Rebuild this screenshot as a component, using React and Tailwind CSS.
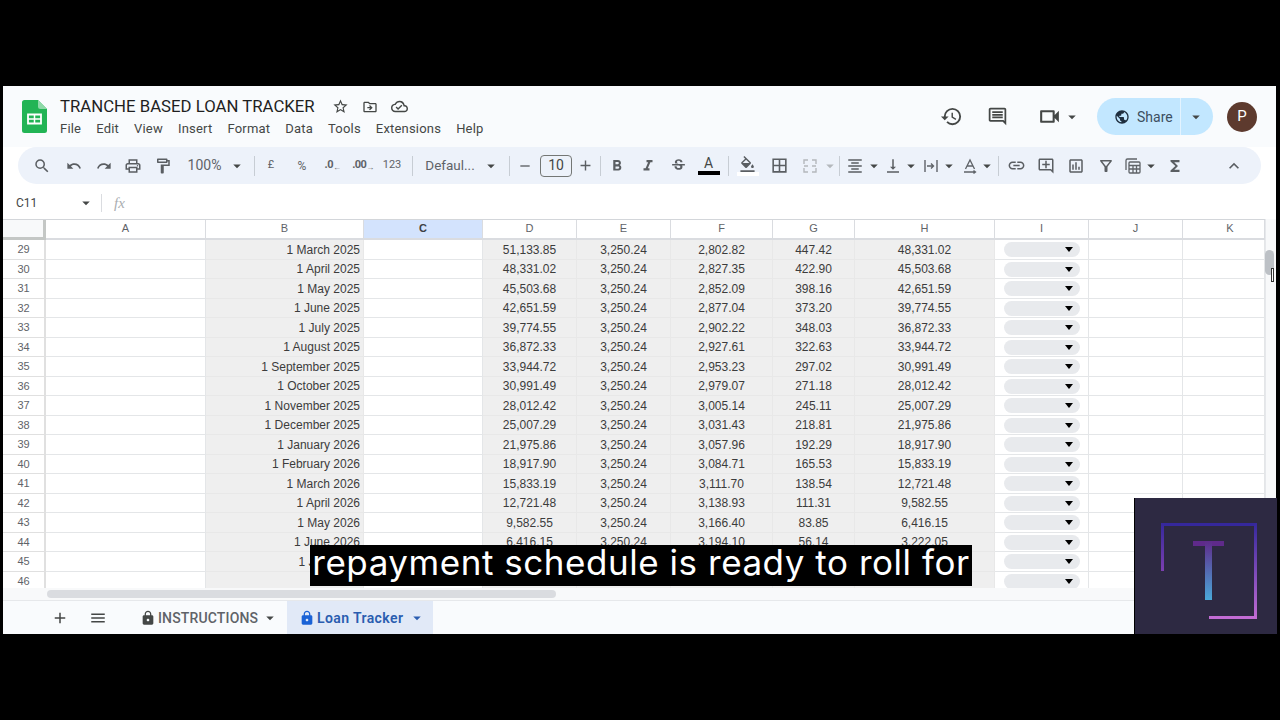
import {
  MdSearch, MdUndo, MdRedo, MdOutlinePrint, MdOutlineFormatPaint, MdArrowDropDown, MdRemove, MdAdd, MdFormatBold,
  MdFormatItalic, MdStrikethroughS, MdOutlineFormatColorFill, MdBorderAll, MdFormatAlignCenter, MdVerticalAlignBottom,
  MdLink, MdOutlineAddComment, MdOutlineInsertChart, MdOutlineFilterAlt, MdFunctions, MdKeyboardArrowUp,
  MdLock, MdMenu, MdStarBorder, MdOutlineDriveFileMove, MdOutlineCloudDone, MdHistory, MdOutlineComment,
  MdOutlineVideocam, MdPublic,
} from "react-icons/md";

const rows = [
  [29, "1 March 2025", "51,133.85", "2,802.82", "447.42", "48,331.02"],
  [30, "1 April 2025", "48,331.02", "2,827.35", "422.90", "45,503.68"],
  [31, "1 May 2025", "45,503.68", "2,852.09", "398.16", "42,651.59"],
  [32, "1 June 2025", "42,651.59", "2,877.04", "373.20", "39,774.55"],
  [33, "1 July 2025", "39,774.55", "2,902.22", "348.03", "36,872.33"],
  [34, "1 August 2025", "36,872.33", "2,927.61", "322.63", "33,944.72"],
  [35, "1 September 2025", "33,944.72", "2,953.23", "297.02", "30,991.49"],
  [36, "1 October 2025", "30,991.49", "2,979.07", "271.18", "28,012.42"],
  [37, "1 November 2025", "28,012.42", "3,005.14", "245.11", "25,007.29"],
  [38, "1 December 2025", "25,007.29", "3,031.43", "218.81", "21,975.86"],
  [39, "1 January 2026", "21,975.86", "3,057.96", "192.29", "18,917.90"],
  [40, "1 February 2026", "18,917.90", "3,084.71", "165.53", "15,833.19"],
  [41, "1 March 2026", "15,833.19", "3,111.70", "138.54", "12,721.48"],
  [42, "1 April 2026", "12,721.48", "3,138.93", "111.31", "9,582.55"],
  [43, "1 May 2026", "9,582.55", "3,166.40", "83.85", "6,416.15"],
  [44, "1 June 2026", "6,416.15", "3,194.10", "56.14", "3,222.05"],
  [45, "1 July 2026", "", "", "", ""],
  [46, "", "", "", "", "0.00"],
];

const gridCols = "grid grid-cols-[43px_160px_158px_119px_94px_94px_102px_82px_140px_94px_94px_82px]";
const cols = "ABCDEFGHIJK".split("");
const colWidths = {
  A: "w-[160px]", B: "w-[158px]", C: "w-[119px]", D: "w-[94px]", E: "w-[94px]", F: "w-[102px]",
  G: "w-[82px]", H: "w-[140px]", I: "w-[94px]", J: "w-[94px]", K: "w-[82px] pl-[13px]",
};

function Tool({ w, children, className = "" }) {
  return <div className={`${w} h-full flex items-center justify-center shrink-0 ${className}`}>{children}</div>;
}

function Sep({ ml = "" }) {
  return <div className={`w-[1px] ${ml} h-[20px] bg-[#c7cdd4] shrink-0`} />;
}

function Caret({ className = "" }) {
  return <MdArrowDropDown size={18} className={`shrink-0 text-[#444746] ${className}`} />;
}

function WrapIcon() {
  return (
    <svg width="16" height="16" viewBox="0 0 16 16" fill="none" stroke="#5f6368" strokeWidth="1.4" className="shrink-0">
      <path d="M2 2v12M14 2v12M4 8h6M8 5.5 10.5 8 8 10.5" />
    </svg>
  );
}

function MergeIcon() {
  return (
    <svg width="16" height="16" viewBox="0 0 16 16" fill="none" stroke="#b4b8bc" strokeWidth="1.4" className="shrink-0">
      <path d="M2 6V2h4M10 2h4v4M2 10v4h4M10 14h4v-4M6 8H2M14 8h-4" />
    </svg>
  );
}

function TiltIcon() {
  return (
    <svg width="16" height="16" viewBox="0 0 16 16" fill="none" stroke="#5f6368" strokeWidth="1.3" className="shrink-0">
      <path d="M3.5 11 8 2l4.5 9M5 8h6M2 14h11M11.5 12.5 13.5 14l-2 1.5" />
    </svg>
  );
}

function CalcIcon() {
  return (
    <svg width="18" height="18" viewBox="0 0 18 18" fill="none" stroke="#5f6368" strokeWidth="1.3" className="shrink-0">
      <path d="M2 13V3.5A1.5 1.5 0 0 1 3.5 2H13" />
      <rect x="5" y="5" width="11" height="11" rx="1" />
      <path d="M5 8.5h11M5 12h11M9 8.5V16M12.5 8.5V16" />
    </svg>
  );
}

function SheetsLogo() {
  return (
    <svg width="25" height="33" viewBox="0 0 25 33" className="shrink-0">
      <path d="M2.5 0H16l9 9v21.5a2.5 2.5 0 0 1-2.5 2.5h-20A2.5 2.5 0 0 1 0 30.5v-28A2.5 2.5 0 0 1 2.5 0Z" fill="#22b455" />
      <path d="M16 0l9 9h-6.5A2.5 2.5 0 0 1 16 6.5Z" fill="#8ed9a8" />
      <path d="M6 14.5h13v9H6Z" fill="none" stroke="#fff" strokeWidth="1.8" />
      <path d="M6 19h13M12.5 14.5v9" stroke="#fff" strokeWidth="1.5" />
    </svg>
  );
}

function Logo() {
  return (
    <svg width="143" height="136" viewBox="0 0 143 136" className="-ml-[1px]">
      <defs>
        <linearGradient id="frameRight" x1="0" y1="0" x2="0" y2="1">
          <stop offset="0" stopColor="#35289c" />
          <stop offset="1" stopColor="#c26cd4" />
        </linearGradient>
        <linearGradient id="frameLeft" x1="0" y1="0" x2="0" y2="1">
          <stop offset="0" stopColor="#35289c" />
          <stop offset="1" stopColor="#7c3fb0" />
        </linearGradient>
        <linearGradient id="stem" x1="0" y1="0" x2="0" y2="1">
          <stop offset="0" stopColor="#5f2a8a" />
          <stop offset="1" stopColor="#4aa8d8" />
        </linearGradient>
      </defs>
      <rect x="27" y="25" width="95" height="3" fill="#35289c" />
      <rect x="27" y="25" width="3" height="48" fill="url(#frameLeft)" />
      <rect x="120" y="25" width="3" height="96" fill="url(#frameRight)" />
      <rect x="75" y="118" width="48" height="3" fill="#c26cd4" />
      <rect x="59" y="43" width="31" height="5" fill="#5f2a8a" />
      <rect x="71" y="43" width="7" height="59" fill="url(#stem)" />
    </svg>
  );
}

function Header() {
  return (
    <div className="h-[61px] flex items-center pl-[19px] pr-[19px] bg-[#f9fbfd] shrink-0">
      <SheetsLogo />
      <div className="ml-[13px] flex flex-col">
        <div className="flex items-center h-[24px]">
          <span className="font-['Roboto',sans-serif] text-[#1f1f1f] text-[16.75px] leading-none w-[255px] whitespace-nowrap">
            TRANCHE BASED LOAN TRACKER
          </span>
          <MdStarBorder size={17} className="ml-[17px] text-[#444746]" />
          <MdOutlineDriveFileMove size={16} className="ml-[13px] text-[#444746]" />
          <MdOutlineCloudDone size={17} className="ml-[13px] text-[#444746]" />
        </div>
        <div className="flex items-center gap-[15px] h-[20px] font-['Roboto',sans-serif] text-[13px] text-[#444746] tracking-[0.2px] leading-none">
          {["File", "Edit", "View", "Insert", "Format", "Data", "Tools", "Extensions", "Help"].map((m) => (
            <span key={m}>{m}</span>
          ))}
        </div>
      </div>
      <div className="ml-auto flex items-center">
        <MdHistory size={23} className="-ml-[1px] text-[#444746]" />
        <MdOutlineComment size={21} className="ml-[24px] text-[#444746]" />
        <MdOutlineVideocam size={25} className="ml-[29px] text-[#444746]" />
        <Caret className="ml-[1px]" />
        <div className="ml-[16px] w-[116px] h-[37px] rounded-full bg-[#c2e7ff] flex items-center">
          <div className="w-[84px] h-full flex items-center pl-[17px] border-r border-[#e3f3ff]">
            <MdPublic size={16} className="text-[#1f2f3f]" />
            <span className="ml-[7px] font-['Roboto',sans-serif] text-[14px] text-[#3d4f5f] leading-none">Share</span>
          </div>
          <Caret className="ml-[6px]" />
        </div>
        <div className="ml-[14px] w-[30px] h-[30px] rounded-full bg-[#5d3a2e] flex items-center justify-center font-['Roboto',sans-serif] text-white text-[15px]">
          P
        </div>
      </div>
    </div>
  );
}

function Toolbar() {
  const ic = "shrink-0 text-[#5a5e62]";
  return (
    <div className="mx-[15px] h-[37px] rounded-full bg-[#edf2fa] flex items-center pl-[9px] shrink-0 font-['Roboto',sans-serif] text-[#5f6368]">
      <Tool w="w-[30px]"><MdSearch size={18} className={ic} /></Tool>
      <Tool w="w-[34px]"><MdUndo size={16} className={ic} /></Tool>
      <Tool w="w-[25px]"><MdRedo size={16} className={ic} /></Tool>
      <Tool w="w-[34px]"><MdOutlinePrint size={18} className={ic} /></Tool>
      <Tool w="w-[26px]"><MdOutlineFormatPaint size={18} className={ic} /></Tool>
      <Tool w="w-[57px]"><span className="text-[14px] text-[#5f6368]">100%</span></Tool>
      <Tool w="w-[8px]"><Caret /></Tool>
      <Sep ml="ml-[13px]" />
      <Tool w="w-[32px]"><span className="text-[11px]">£</span></Tool>
      <Tool w="w-[30px]"><span className="text-[12px]">%</span></Tool>
      <Tool w="w-[31px]"><span className="text-[11px] font-bold tracking-tighter">.0<sub className="text-[8px]">←</sub></span></Tool>
      <Tool w="w-[30px]"><span className="text-[11px] font-bold tracking-tighter">.00<sub className="text-[8px]">→</sub></span></Tool>
      <Tool w="w-[28px]"><span className="text-[11px]">123</span></Tool>
      <Sep ml="ml-[6px]" />
      <Tool w="w-[74px]"><span className="text-[13.5px]">Defaul...</span></Tool>
      <Tool w="w-[8px]"><Caret /></Tool>
      <Sep ml="ml-[14px]" />
      <Tool w="w-[30px]"><MdRemove size={16} className={ic} /></Tool>
      <Tool w="w-[32px]">
        <div className="w-[32px] h-[22px] rounded-[4px] border border-[#747775] flex items-center justify-center text-[14px] text-[#444746]">10</div>
      </Tool>
      <Tool w="w-[26px]"><MdAdd size={17} className={ic} /></Tool>
      <Sep ml="ml-[2px]" />
      <Tool w="w-[32px]"><MdFormatBold size={18} className={ic} /></Tool>
      <Tool w="w-[30px]"><MdFormatItalic size={18} className={ic} /></Tool>
      <Tool w="w-[30px]"><MdStrikethroughS size={17} className={ic} /></Tool>
      <Tool w="w-[31px]">
        <div className="flex flex-col items-center">
          <span className="text-[14px] leading-[13px] text-[#444746]">A</span>
          <div className="w-[22px] h-[4px] mt-[1px] bg-black" />
        </div>
      </Tool>
      <Sep ml="ml-[4px]" />
      <Tool w="w-[37px]">
        <div className="flex flex-col items-center">
          <MdOutlineFormatColorFill size={17} className={ic} />
          <div className="w-[22px] h-[4px] -mt-[1px] bg-white" />
        </div>
      </Tool>
      <Tool w="w-[27px]"><MdBorderAll size={19} className={ic} /></Tool>
      <Tool w="w-[33px]"><MergeIcon /></Tool>
      <Tool w="w-[8px]"><MdArrowDropDown size={18} className="shrink-0 text-[#b4b8bc]" /></Tool>
      <Sep ml="ml-[5px]" />
      <Tool w="w-[24px]" className="ml-[3px]"><MdFormatAlignCenter size={18} className={ic} /></Tool>
      <Tool w="w-[13px]"><Caret /></Tool>
      <Tool w="w-[22px]" className="ml-[2px]"><MdVerticalAlignBottom size={18} className={ic} /></Tool>
      <Tool w="w-[13px]"><Caret /></Tool>
      <Tool w="w-[28px]"><WrapIcon /></Tool>
      <Tool w="w-[7px]"><Caret /></Tool>
      <Tool w="w-[26px]" className="ml-[5px]"><TiltIcon /></Tool>
      <Tool w="w-[7px]"><Caret /></Tool>
      <Sep ml="ml-[8px]" />
      <Tool w="w-[35px]"><MdLink size={19} className={ic} /></Tool>
      <Tool w="w-[24px]"><MdOutlineAddComment size={18} className={ic} /></Tool>
      <Tool w="w-[36px]"><MdOutlineInsertChart size={18} className={ic} /></Tool>
      <Tool w="w-[24px]"><MdOutlineFilterAlt size={18} className={ic} /></Tool>
      <Tool w="w-[30px]"><CalcIcon /></Tool>
      <Tool w="w-[6px]"><Caret /></Tool>
      <Tool w="w-[42px]"><MdFunctions size={18} className={ic} /></Tool>
      <Tool w="w-[40px]" className="ml-[18px]"><MdKeyboardArrowUp size={20} className={ic} /></Tool>
    </div>
  );
}

function FormulaBar() {
  return (
    <div className="h-[35px] flex items-center pl-[13px] pt-[3px] bg-white shrink-0 font-['Roboto',sans-serif] text-[12px] text-[#444746]">
      <span className="w-[61px]">C11</span>
      <MdArrowDropDown size={18} className="text-[#444746]" />
      <div className="ml-[6px] w-[1px] h-[18px] bg-[#dadce0]" />
      <span className="ml-[12px] font-['Liberation_Serif',serif] italic text-[15px] text-[#a9adb1]">fx</span>
    </div>
  );
}

function ColHeader() {
  return (
    <div className="flex h-[21px] bg-white border-t border-[#d3d6da] shrink-0 font-['Liberation_Sans',sans-serif] text-[11px] text-[#5f6368]">
      <div className="w-[43px] bg-[#f8f9fa] border-r-[3px] border-b-[3px] border-[#c4c7c5]" />
      {cols.map((c) => (
        <div
          key={c}
          className={`${colWidths[c]} flex items-center justify-center pb-[1px] border-r border-b-2 border-[#dadce0] ${c === "C" ? "bg-[#d3e3fd] font-bold text-[#3c4043]" : ""}`}
        >
          {c}
        </div>
      ))}
    </div>
  );
}

function Row({ r }) {
  const [n, date, d, f, g, h] = r;
  const cell = "border-r border-b border-[#e4e6e8] flex items-center pt-[1px] whitespace-nowrap overflow-hidden";
  const shade = "bg-[#efefef] border-[#e8e8e8]";
  const num = `${cell} ${shade} justify-center`;
  return (
    <div className={`${gridCols} h-[19.5px] font-['Liberation_Sans',sans-serif] text-[12px] text-[#3c3c3c] leading-none`}>
      <div className="border-r-2 border-b border-[#e0e0e0] bg-white flex items-center justify-center pt-[1px] text-[11px] text-[#5f6368]">{n}</div>
      <div className={cell} />
      <div className={`${cell} ${shade} justify-end pr-[3px]`}>{date}</div>
      <div className={cell} />
      <div className={num}>{d}</div>
      <div className={num}>{n < 45 ? "3,250.24" : ""}</div>
      <div className={num}>{f}</div>
      <div className={num}>{g}</div>
      <div className={num}>{h}</div>
      <div className={`${cell} justify-center`}>
        <div className="w-[76px] h-[15px] rounded-full bg-[#e8eaed] flex items-center justify-end pr-[7px]">
          <div className="w-0 h-0 border-l-[4px] border-r-[4px] border-t-[5px] border-l-transparent border-r-transparent border-t-black" />
        </div>
      </div>
      <div className={cell} />
      <div className={cell} />
    </div>
  );
}

function Tabs() {
  return (
    <div className="h-[34px] flex items-center bg-[#f9fbfd] border-t border-[#e6e8eb] shrink-0 font-['Roboto',sans-serif] text-[14px]">
      <MdAdd size={18} className="ml-[48px] text-[#444746]" />
      <MdMenu size={18} className="ml-[20px] text-[#444746]" />
      <div className="ml-[30px] w-[150px] flex items-center pl-[3px] pt-[1px] text-[#5f6368] font-medium">
        <MdLock size={16} className="text-[#444746]" />
        <span className="ml-[2px] tracking-[0.15px]">INSTRUCTIONS</span>
        <Caret className="ml-[3px]" />
      </div>
      <div className="w-[146px] h-full bg-[#e1e9f7] flex items-center pl-[12px] pt-[1px] text-[#2a5db0] font-semibold">
        <MdLock size={16} className="text-[#1a62d6]" />
        <span className="ml-[2px] tracking-[0.4px]">Loan Tracker</span>
        <MdArrowDropDown size={18} className="ml-[5px] text-[#2a5db0]" />
      </div>
    </div>
  );
}

export default function App() {
  return (
    <div className="w-[1280px] h-[720px] bg-black pt-[86px] overflow-hidden">
      <div className="relative ml-[3px] w-[1273px] h-[548px] bg-white flex flex-col">
        <Header />
        <Toolbar />
        <FormulaBar />
        <div className="flex-1 min-h-0 flex flex-col">
          <div className="flex flex-1 min-h-0">
            <div className="w-[1262px] flex flex-col">
              <ColHeader />
              <div className="h-[349px] overflow-hidden">
                {rows.map((r) => <Row key={r[0]} r={r} />)}
              </div>
            </div>
            <div className="flex-1 bg-[#f8f9fa] border-l border-[#e6e8eb]" />
          </div>
          <div className="h-[12px] bg-[#f8f9fa] flex items-center pl-[44px] shrink-0">
            <div className="w-[509px] h-[8px] rounded-full bg-[#dadce0]" />
          </div>
          <Tabs />
        </div>

        {/* vertical scrollbar thumb + mouse pointer */}
        <div className="absolute left-[1262px] top-[164px] w-[9px] h-[25px] rounded-full bg-[#bdc1c6]" />
        <div className="absolute left-[1268px] top-[182px] w-[3px] h-[14px] border border-[#333] bg-white" />

        {/* caption */}
        <div className="absolute left-[307px] top-[459px] w-[662px] h-[41px] bg-black flex items-center justify-center pb-[7px] font-['Inter',sans-serif] text-white text-[35px] tracking-[0.54px] leading-none whitespace-nowrap">
          repayment schedule is ready to roll for
        </div>

        {/* channel watermark */}
        <div className="absolute left-[1131px] top-[412px] w-[143px] h-[136px] bg-[#2d2942] border-l border-black">
          <Logo />
        </div>
      </div>
    </div>
  );
}
